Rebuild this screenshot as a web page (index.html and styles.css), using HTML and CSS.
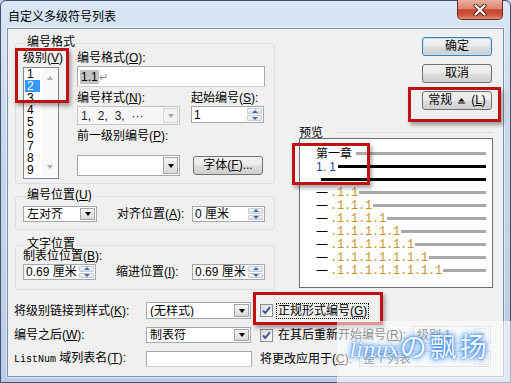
FILE: index.html
```html
<!DOCTYPE html>
<html lang="zh-CN">
<head>
  <meta charset="UTF-8" />
  <title>自定义多级符号列表</title>
  <link rel="stylesheet" href="styles.css">
</head>
<body>

  <div class="window">
    <div class="titlebar">
      <span class="title">自定义多级符号列表</span>
      <div class="close-btn">
        <svg width="14" height="12" viewBox="0 0 14 12">
          <path d="M2.5 1.5 L11.5 10.5 M11.5 1.5 L2.5 10.5" stroke="#5a1c12" stroke-width="4" stroke-linecap="round"/>
          <path d="M2.5 1.5 L11.5 10.5 M11.5 1.5 L2.5 10.5" stroke="#fff" stroke-width="2.2" stroke-linecap="round"/>
        </svg>
      </div>
    </div>

    <div class="client">
      <div class="top">
        <!-- left column: groups -->
        <div class="left">
          <div class="group group-format">
            <div class="group-title">编号格式</div>
            <div class="format-body">
              <div class="levels">
                <div class="lbl">级别(<u>V</u>)</div>
                <div class="listbox">
                  <div class="list-items">
                    <div>1</div>
                    <div class="sel">2</div>
                    <div>3</div>
                    <div>4</div>
                    <div>5</div>
                    <div>6</div>
                    <div>7</div>
                    <div>8</div>
                    <div>9</div>
                  </div>
                  <div class="list-scroll">
                    <span class="arr arr-up"></span>
                    <span class="arr arr-down"></span>
                  </div>
                </div>
              </div>

              <div class="format-form">
                <div class="lbl">编号格式(<u>O</u>):</div>
                <div class="textbox fmt-input"><span class="hl">1.1</span><span class="ret">↵</span></div>
                <div class="f-row f-labels">
                  <div class="lbl w-combo">编号样式(<u>N</u>):</div>
                  <div class="lbl">起始编号(<u>S</u>):</div>
                </div>
                <div class="f-row">
                  <div class="combo disabled style-combo"><span class="val dots">1, 2, 3, ···</span><span class="drop"></span></div>
                  <div class="spin start-spin"><span class="val">1</span><span class="btns"><i class="up"></i><i class="down"></i></span></div>
                </div>
                <div class="lbl prev-lbl">前一级别编号(<u>P</u>):</div>
                <div class="f-row prev-row">
                  <div class="combo prev-combo"><span class="val"></span><span class="drop"></span></div>
                  <button class="btn font-btn">字体(<u>F</u>)...</button>
                </div>
              </div>
            </div>
          </div>

          <div class="group group-pos">
            <div class="group-title">编号位置(<u>U</u>)</div>
            <div class="g-row">
              <div class="combo align-combo"><span class="val">左对齐</span><span class="drop"></span></div>
              <div class="lbl g-lbl">对齐位置(<u>A</u>):</div>
              <div class="spin g-spin"><span class="val">0 厘米</span><span class="btns"><i class="up"></i><i class="down"></i></span></div>
            </div>
          </div>

          <div class="group group-text">
            <div class="group-title">文字位置</div>
            <div class="lbl">制表位位置(<u>B</u>):</div>
            <div class="g-row text-row">
              <div class="spin g-spin-l"><span class="val">0.69 厘米</span><span class="btns"><i class="up"></i><i class="down"></i></span></div>
              <div class="lbl g-lbl2">缩进位置(<u>I</u>):</div>
              <div class="spin g-spin"><span class="val">0.69 厘米</span><span class="btns"><i class="up"></i><i class="down"></i></span></div>
            </div>
          </div>
        </div>

        <!-- right column: buttons and preview -->
        <div class="right">
          <button class="btn default">确定</button>
          <button class="btn">取消</button>
          <button class="btn less-btn"><span>常规</span>
            <svg width="7" height="7" viewBox="0 0 7 7"><path d="M0.5 4.5 L3.5 1 L6.5 4.5 Z" fill="#000"/><rect x="0" y="5.5" width="7" height="1" fill="#000"/></svg>
            <span>(<u>L</u>)</span></button>

          <div class="preview-head">
            <span class="lbl">预览</span>
            <i class="sep"></i>
          </div>
          <div class="preview">
            <div class="pv-row"><span class="pv-head">第一章</span><i class="pv-line gray first"></i></div>
            <div class="pv-row"><span class="pv-blue">1. 1</span><i class="pv-line black second"></i></div>
            <div class="pv-row"><i class="pv-line black third"></i></div>
            <div class="pv-row"><span class="pv-dash">一</span><b class="pv-num">.1.1</b><i class="pv-line gray"></i></div>
            <div class="pv-row"><span class="pv-dash">一</span><b class="pv-num">.1.1.1</b><i class="pv-line gray"></i></div>
            <div class="pv-row"><span class="pv-dash">一</span><b class="pv-num">.1.1.1.1</b><i class="pv-line gray"></i></div>
            <div class="pv-row"><span class="pv-dash">一</span><b class="pv-num">.1.1.1.1.1</b><i class="pv-line gray"></i></div>
            <div class="pv-row"><span class="pv-dash">一</span><b class="pv-num">.1.1.1.1.1.1</b><i class="pv-line gray"></i></div>
            <div class="pv-row"><span class="pv-dash">一</span><b class="pv-num">.1.1.1.1.1.1.1</b><i class="pv-line gray"></i></div>
            <div class="pv-row"><span class="pv-dash">一</span><b class="pv-num">.1.1.1.1.1.1.1.1</b><i class="pv-line gray"></i></div>
          </div>
        </div>
      </div>

      <!-- bottom rows -->
      <div class="bottom">
        <div class="b-row">
          <div class="lbl b-lbl">将级别链接到样式(<u>K</u>):</div>
          <div class="combo b-combo"><span class="val">(无样式)</span><span class="drop"></span></div>
          <span class="check">
            <svg width="13" height="13" viewBox="0 0 13 13"><path d="M3 6.5 L5.3 9 L10 3.2" fill="none" stroke="#3d5a98" stroke-width="2"/></svg>
          </span>
          <span class="chk-lbl focus">正规形式编号(<u>G</u>)</span>
        </div>
        <div class="b-row row2">
          <div class="lbl b-lbl">编号之后(<u>W</u>):</div>
          <div class="combo b-combo"><span class="val">制表符</span><span class="drop"></span></div>
          <span class="check">
            <svg width="13" height="13" viewBox="0 0 13 13"><path d="M3 6.5 L5.3 9 L10 3.2" fill="none" stroke="#3d5a98" stroke-width="2"/></svg>
          </span>
          <span class="chk-lbl">在其后重新开始编号(<u>R</u>):</span>
          <div class="combo disabled level-combo"><span class="val">级别 1</span><span class="drop"></span></div>
        </div>
        <div class="b-row row3">
          <div class="lbl b-lbl"><span class="mono">ListNum</span> 域列表名(<u>T</u>):</div>
          <div class="textbox b-input"></div>
          <span class="lbl apply-lbl">将更改应用于(<u>C</u>):</span>
          <div class="combo disabled apply-combo"><span class="val">整个列表</span><span class="drop"></span></div>
        </div>
      </div>
    </div>
  </div>

  <!-- annotation boxes -->
  <div class="mark mark-level"></div>
  <div class="mark mark-less"></div>
  <div class="mark mark-preview"></div>
  <div class="mark mark-legal"></div>

  <!-- watermark -->
  <div class="haze"></div>
  <div class="watermark"><span class="wm-latin">linux</span>の飘扬</div>

</body>
</html>
```

FILE: styles.css
```css
body {
  margin: 0;
  width: 511px;
  height: 383px;
  overflow: hidden;
  position: relative;
  font-family: "Liberation Sans", "Noto Sans CJK SC", sans-serif;
  font-size: 12px;
  line-height: 12px;
  color: #000;
  background: #bcd0e8;
}
u {
  text-decoration: underline;
}
.window {
  box-sizing: border-box;
  width: 511px;
  height: 383px;
  border: 1px solid #41526a;
  border-radius: 6px 6px 0 0;
  background: linear-gradient(#dae6f5, #c5d7ed 40%, #b8cde7);
  display: flex;
  flex-direction: column;
}
.titlebar {
  flex: none;
  height: 27px;
  display: flex;
  align-items: flex-start;
}
.title {
  margin: 8px 0 0 7px;
  line-height: 14px;
  font-family: "Noto Sans CJK SC", sans-serif;
}
.close-btn {
  margin: -1px 7px 0 auto;
  width: 46px;
  height: 20px;
  box-sizing: border-box;
  border: 1px solid #6b2a1f;
  border-top: none;
  border-radius: 0 0 5px 5px;
  background: linear-gradient(#eab0a2, #d98470 45%, #c6442a 52%, #cf583d 80%, #e48f78);
  display: flex;
  align-items: center;
  justify-content: center;
}
.client {
  flex: none;
  height: 349px;
  margin: 0 6px;
  box-sizing: border-box;
  border: 1px solid #7e90a8;
  background: #f0f0f0;
  box-shadow: 0 0 0 1px rgba(255, 255, 255, 0.5);
}
.top {
  display: flex;
  height: 261px;
}
.left {
  width: 260px;
  margin-left: 7px;
  padding-top: 14px;
}
.right {
  flex: 1;
  display: flex;
  flex-direction: column;
  padding-top: 8px;
}

/* group boxes */
.group {
  box-sizing: border-box;
  border: 1px solid #d5dfe5;
  border-radius: 3px;
  padding: 0 9px 0 7px;
}
.group-title {
  display: table;
  margin: -8px 0 0 3px;
  padding: 0 1px;
  background: #f0f0f0;
}
.group-format {
  height: 141px;
}
.group-pos {
  height: 34px;
  margin-top: 12px;
}
.group-text {
  height: 45px;
  margin-top: 15px;
}
.lbl {
  white-space: nowrap;
}
.format-body {
  display: flex;
  margin-top: 4px;
}
.levels {
  width: 36px;
}
.listbox {
  margin-top: 3px;
  height: 112px;
  box-sizing: border-box;
  border: 1px solid #828790;
  background: #fff;
  display: flex;
}
.list-items {
  width: 17px;
}
.list-items div {
  margin-left: 1px;
  width: 15px;
  height: 12px;
  padding-left: 2px;
  box-sizing: border-box;
}
.list-items .sel {
  background: #3399ff;
  color: #fff;
}
.list-scroll {
  width: 16px;
  margin-left: auto;
  background: #f8f8f8;
  display: flex;
  flex-direction: column;
  justify-content: space-between;
  align-items: center;
  padding: 8px 0 9px;
}
.arr {
  width: 0;
  height: 0;
  border-left: 3.5px solid transparent;
  border-right: 3.5px solid transparent;
}
.arr-up {
  border-bottom: 4px solid #b0b0b0;
}
.arr-down {
  border-top: 4px solid #b0b0b0;
}
.format-form {
  margin-left: 18px;
  width: 188px;
}
.textbox {
  box-sizing: border-box;
  border: 1px solid #a4a8b0;
  border-bottom-color: #c9ced6;
  background: #fff;
}
.fmt-input {
  height: 21px;
  margin-top: 2px;
  display: flex;
  align-items: center;
  padding-left: 2px;
}
.hl {
  background: #c3c3c3;
  padding: 1px 1px;
}
.ret {
  color: #8a8a8a;
  font-size: 11px;
}
.f-row {
  display: flex;
  align-items: flex-start;
}
.f-labels {
  margin-top: 5px;
}
.f-row + .f-row,
.f-labels + .f-row {
  margin-top: 2px;
}
.w-combo {
  width: 114px;
}
.style-combo {
  width: 103px;
  height: 19px;
}
.start-spin {
  margin-left: 11px;
  width: 73px;
  height: 17px;
}
.dots {
  word-spacing: 3.5px;
}
.prev-lbl {
  margin-top: 5px;
}
.prev-row {
  margin-top: 13px !important;
}
.prev-combo {
  width: 103px;
  height: 21px;
}
.font-btn {
  margin: 1px 0 0 13px;
  width: 71px;
  height: 17px;
  line-height: 15px;
}

/* combos, spinners, buttons */
.combo {
  box-sizing: border-box;
  display: flex;
  border: 1px solid #a4a8b0;
  background: #fff;
}
.combo .val {
  flex: 1;
  padding-left: 3px;
  align-self: center;
  white-space: nowrap;
  overflow: hidden;
}
.combo .drop {
  width: 13px;
  margin: 1px;
  border: 1px solid #a5a5a5;
  background: linear-gradient(#f6f6f6, #d9d9d9);
  display: flex;
  align-items: center;
  justify-content: center;
}
.combo .drop::after {
  content: "";
  border-left: 3.5px solid transparent;
  border-right: 3.5px solid transparent;
  border-top: 4px solid #000;
}
.combo.disabled {
  background: #f6f6f6;
  border-color: #c5c5c5;
  color: #222;
}
.combo.disabled .drop {
  border-color: #d4d4d4;
  background: #f2f2f2;
}
.combo.disabled .drop::after {
  border-top-color: #a8a8a8;
}
.spin {
  box-sizing: border-box;
  display: flex;
  border: 1px solid #a4a8b0;
  background: #fff;
}
.spin .val {
  flex: 1;
  padding-left: 2px;
  align-self: center;
  white-space: nowrap;
}
.spin .btns {
  width: 15px;
  margin: 1px;
  display: flex;
  flex-direction: column;
  gap: 1px;
}
.spin .btns i {
  flex: 1;
  background: linear-gradient(#f4f7fb, #dbe3ee);
  border: 1px solid #c3ccd8;
  border-radius: 1px;
  display: flex;
  align-items: center;
  justify-content: center;
}
.spin .up::after {
  content: "";
  border-left: 3px solid transparent;
  border-right: 3px solid transparent;
  border-bottom: 3px solid #4f6a9a;
}
.spin .down::after {
  content: "";
  border-left: 3px solid transparent;
  border-right: 3px solid transparent;
  border-top: 3px solid #4f6a9a;
}
.btn {
  box-sizing: border-box;
  width: 70px;
  height: 19px;
  padding: 0;
  border: 1px solid #707070;
  border-radius: 3px;
  background: linear-gradient(#f2f2f2, #ebebeb 48%, #dddddd 52%, #cfcfcf);
  font: inherit;
  line-height: 17px;
  color: #000;
  text-align: center;
}
.right .btn {
  align-self: flex-end;
  margin: 0 11px 8px 0;
}
.btn.default {
  border-color: #3c7fb1;
  box-shadow: inset 0 0 0 1px #bfe4f8;
}
.less-btn {
  display: flex;
  align-items: center;
  justify-content: center;
  gap: 6px;
}

/* position groups */
.g-row {
  display: flex;
  align-items: center;
  height: 16px;
  margin-top: 5px;
}
.align-combo {
  width: 74px;
  height: 16px;
}
.g-lbl {
  margin-left: 20px;
}
.g-lbl2 {
  margin-left: 20px;
}
.g-spin {
  margin-left: auto;
  width: 73px;
  height: 16px;
}
.g-spin-l {
  width: 73px;
  height: 16px;
}
.text-row {
  margin-top: 2px;
}

/* preview */
.preview-head {
  display: flex;
  margin: 9px 10px 0 24px;
}
.sep {
  flex: 1;
  height: 1px;
  margin: 5px 0 0 12px;
  background: #d5dfe5;
}
.preview {
  margin: -1px 10px 0 24px;
  height: 150px;
  box-sizing: border-box;
  border: 1px solid #707070;
  background: #fff;
  padding: 8px 6px 0 16px;
}
.pv-row {
  display: flex;
  align-items: center;
  height: 13px;
}
.pv-line {
  flex: 1;
  height: 3px;
  margin-left: 1px;
}
.pv-line.gray {
  background: #a9a9a9;
}
.pv-line.black {
  background: #000;
}
.pv-line.first {
  margin-left: 4px;
}
.pv-line.second {
  margin-left: 2px;
}
.pv-line.third {
  margin-left: 5px;
}
.pv-blue {
  color: #2647a0;
}
.pv-dash {
  width: 14px;
  flex: none;
  font-family: "Noto Sans CJK SC", sans-serif;
}
.pv-num {
  flex: none;
  font-family: "Liberation Mono", monospace;
  font-weight: normal;
  letter-spacing: -0.2px;
  color: #c8941e;
  white-space: nowrap;
}

/* bottom rows */
.bottom {
  margin-top: 12px;
  padding: 0 12px 0 6px;
}
.b-row {
  display: flex;
  align-items: center;
  height: 17px;
}
.row2 {
  margin-top: 8px;
  height: 16px;
}
.row3 {
  margin-top: 8px;
  height: 16px;
}
.b-lbl {
  width: 132px;
}
.mono {
  font-family: "Liberation Mono", monospace;
  font-size: 10px;
}
.b-combo {
  width: 105px;
  height: 17px;
}
.row2 .b-combo {
  height: 16px;
}
.b-input {
  width: 106px;
  height: 16px;
}
.check {
  margin-left: 9px;
  width: 13px;
  height: 13px;
  box-sizing: border-box;
  border: 1px solid #8e8f8f;
  background: linear-gradient(135deg, #dcdcdc, #fbfbfb);
  display: flex;
}
.check svg {
  margin: -1px;
}
.chk-lbl {
  margin-left: 4px;
  padding: 1px 1px;
  white-space: nowrap;
}
.chk-lbl.focus {
  outline: 1px dotted #000;
}
.level-combo {
  margin-left: auto;
  width: 78px;
  height: 18px;
}
.apply-lbl {
  margin-left: 8px;
}
.apply-combo {
  margin-left: auto;
  width: 132px;
  height: 16px;
}

/* annotation boxes */
.mark {
  position: absolute;
  box-sizing: border-box;
  border: 3px solid #c01010;
  box-shadow: 2px 3px 4px rgba(0, 0, 0, 0.35);
}
.mark-level {
  left: 15px;
  top: 48px;
  width: 54px;
  height: 55px;
}
.mark-less {
  left: 408px;
  top: 87px;
  width: 93px;
  height: 35px;
}
.mark-preview {
  left: 292px;
  top: 143px;
  width: 78px;
  height: 42px;
}
.mark-legal {
  left: 253px;
  top: 292px;
  width: 130px;
  height: 33px;
}

/* watermark */
.haze {
  position: absolute;
  left: 337px;
  top: 321px;
  width: 174px;
  height: 62px;
  background: rgba(255, 255, 255, 0.55);
}
.watermark {
  position: absolute;
  left: 350px;
  top: 330px;
  font-family: "Noto Sans CJK SC", sans-serif;
  font-size: 27px;
  line-height: 32px;
  letter-spacing: 3px;
  color: #f2f8ff;
  text-shadow: 0 0 2px #1f6fd6, 0 0 5px #3d8ef0, 0 0 9px #5aa5f7;
  white-space: nowrap;
}
.wm-latin {
  font-family: "DejaVu Serif", serif;
  font-style: italic;
  font-size: 20px;
  letter-spacing: 0;
}
```
